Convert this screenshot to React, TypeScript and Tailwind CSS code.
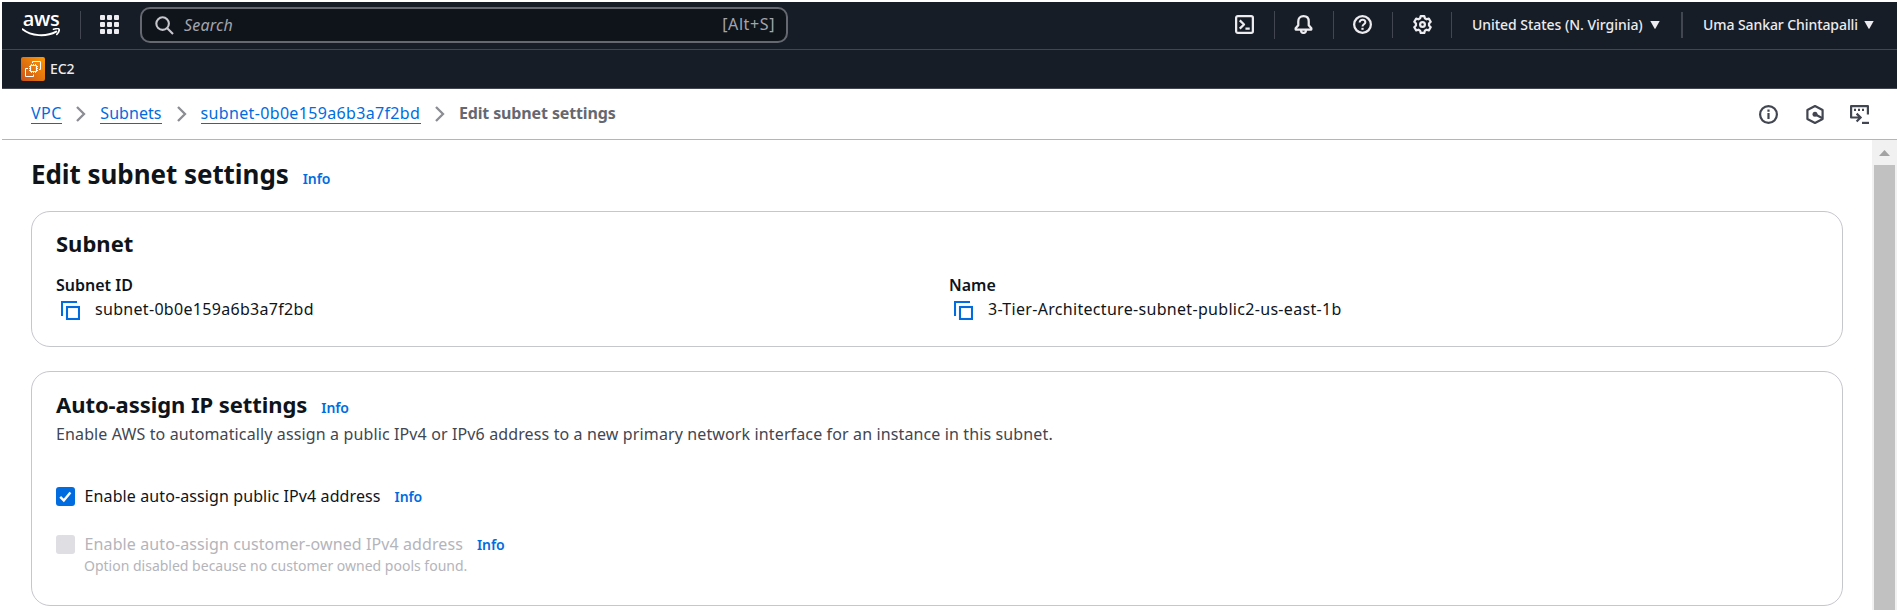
import type { ReactNode } from "react";

function AwsLogo() {
  return (
    <div className="flex w-[38px] flex-col items-center">
      <span className="h-[15px] font-['Open_Sans'] text-[20px] leading-[12px] font-semibold tracking-[-0.3px] text-white">aws</span>
      <svg width="38" height="9" viewBox="0 0 38 9" fill="none" stroke="#fff" className="block">
        <path d="M0.5 1.2C9 8.2 24 9.2 34.2 3.6" strokeWidth="2" strokeLinecap="round" />
        <path d="M31.5 1.2C34 0.6 36.6 0.5 37 1.2C37.4 2 36.6 4.6 34.8 6.4" strokeWidth="1.6" strokeLinecap="round" />
      </svg>
    </div>
  );
}

function Ec2Icon() {
  return (
    <svg width="24" height="24" viewBox="0 0 24 24" fill="none" className="block">
      <defs>
        <linearGradient id="ec2" x1="0" y1="1" x2="1" y2="0">
          <stop offset="0" stopColor="#c8511b" />
          <stop offset="1" stopColor="#ff9900" />
        </linearGradient>
      </defs>
      <rect width="24" height="24" rx="2" fill="url(#ec2)" />
      <g stroke="#fff" strokeWidth="1">
        <rect x="9.5" y="8.5" width="6" height="6" rx="0.5" strokeWidth="1.2" />
        <path d="M10.5 7v1.5M12.5 7v1.5M14.5 7v1.5M10.5 14.5V16M12.5 14.5V16M14.5 14.5V16M8 9.5h1.5M8 11.5h1.5M8 13.5h1.5M15.5 9.5H17M15.5 11.5H17M15.5 13.5H17" strokeWidth="0.9" />
        <path d="M11.5 6V4.5h8v8H18" />
        <path d="M7 11.5H4.5v8h8V17.5" />
      </g>
    </svg>
  );
}

function AppsIcon() {
  return (
    <svg width="19" height="19" viewBox="0 0 19 19" fill="#ebebf0" className="block">
      {[0, 7, 14].map((y) => [0, 7, 14].map((x) => <rect key={`${x}-${y}`} x={x} y={y} width="5" height="5" rx="1" />))}
    </svg>
  );
}

function HeaderIcon({ children }: { children: ReactNode }) {
  return (
    <svg width="19" height="19" viewBox="0 0 16 16" fill="none" stroke="#ebebf0" strokeWidth="1.9" strokeLinejoin="round" className="block">
      {children}
    </svg>
  );
}

function CopyIcon() {
  return (
    <svg width="19" height="19" viewBox="0 0 19 19" fill="none" stroke="#006ce0" strokeWidth="2.1" className="block">
      <path d="M1 15V1H16" />
      <rect x="6" y="6" width="12" height="12" />
    </svg>
  );
}

function Chevron() {
  return (
    <svg width="10" height="16" viewBox="0 0 10 16" fill="none" stroke="#8c8c94" strokeWidth="2.3" className="mt-[3px] block">
      <path d="M1 1L8 8L1 15" />
    </svg>
  );
}

function Caret() {
  return (
    <svg width="10" height="8" viewBox="0 0 10 8" fill="#ebebf0" className="block">
      <path d="M0.3 0H9.7L5.5 7.4Q5 8 4.5 7.4Z" />
    </svg>
  );
}

const Divider = () => <div className="h-[28px] w-px bg-[#424650]" />;

function Info({ className = "" }: { className?: string }) {
  return <a className={`text-[14px] leading-[20px] font-semibold tracking-[-0.1px] text-[#006ce0] ${className}`}>Info</a>;
}

function Field({ label, value }: { label: string; value: string }) {
  return (
    <div>
      <div className="text-[16px] leading-[20px] font-semibold tracking-[0px]">{label}</div>
      <div className="mt-1 flex h-5 items-center pl-[5px]">
        <div className="mt-[3px]">
          <CopyIcon />
        </div>
        <span className="ml-[15px] text-[16px] leading-[20px] tracking-[0.31px]">{value}</span>
      </div>
    </div>
  );
}

function TopBar() {
  return (
    <header className="bg-[#161d26] text-[#ebebf0]">
      <div className="flex h-[48px] items-center border-b border-[#424650] pb-[2px] pl-5">
        <AwsLogo />
        <div className="ml-5">
          <Divider />
        </div>
        <div className="ml-[19px]">
          <AppsIcon />
        </div>
        <div className="mt-px ml-[21px] flex h-[36px] w-[648px] items-center rounded-[10px] border-2 border-[#656871] bg-[#0f141a] pr-[11px] pl-[13px]">
          <svg width="19" height="19" viewBox="0 0 19 19" fill="none" stroke="#c6c6cd" strokeWidth="2.1" className="block">
            <circle cx="7.6" cy="7.6" r="6.3" />
            <path d="M12 12L18 18" />
          </svg>
          <span className="ml-[10px] text-[16px] leading-[20px] tracking-[0.2px] text-[#a4a4ad] italic">Search</span>
          <span className="mb-[3px] ml-auto text-[16px] leading-[20px] tracking-[0.6px] text-[#a4a4ad]">[Alt+S]</span>
        </div>
        <div className="ml-auto flex items-center">
          <HeaderIcon>
            <rect x="0.95" y="0.95" width="14.1" height="14.1" rx="1.4" />
            <path d="M4 4.5L7.6 8L4 11.5M8.8 11.4H12.4" />
          </HeaderIcon>
          <div className="mr-[19px] ml-[20px]">
            <Divider />
          </div>
          <HeaderIcon>
            <path d="M8 0.95C5 0.95 3.6 3 3.6 5.4V8.6L1.4 11.2V12.3H14.6V11.2L12.4 8.6V5.4C12.4 3 11 0.95 8 0.95Z" />
            <path d="M5.9 12.6C5.9 14 6.8 15.1 8 15.1C9.2 15.1 10.1 14 10.1 12.6" />
          </HeaderIcon>
          <div className="mr-[19px] ml-[20px]">
            <Divider />
          </div>
          <HeaderIcon>
            <circle cx="8" cy="8" r="7.05" />
            <path d="M5.6 6.3C5.6 4.9 6.7 4 8 4C9.4 4 10.4 4.9 10.4 6.1C10.4 7.8 8 7.8 8 9.7" strokeWidth="1.7" />
            <path d="M8 10.8V12.5" />
          </HeaderIcon>
          <div className="mr-[20px] ml-[20px]">
            <div className="h-[26px] w-px bg-[#424650]" />
          </div>
          <HeaderIcon>
            <path d="M6.5 0.95H9.5L10 2.8L11.4 3.6L13.3 3.1L14.9 5.7L13.5 7.1V8.9L14.9 10.3L13.3 12.9L11.4 12.4L10 13.2L9.5 15.05H6.5L6 13.2L4.6 12.4L2.7 12.9L1.1 10.3L2.5 8.9V7.1L1.1 5.7L2.7 3.1L4.6 3.6L6 2.8Z" />
            <circle cx="8" cy="8" r="2" />
          </HeaderIcon>
          <div className="ml-[19px] h-[26px] w-px bg-[#424650]" />
          <span className="ml-[20px] w-[172px] text-[14px] leading-[20px] font-medium tracking-[-0.04px] whitespace-nowrap">United States (N. Virginia)</span>
          <div className="mt-px ml-[6px]">
            <Caret />
          </div>
          <div className="ml-[21px] h-[26px] w-[2px] bg-[#424650]" />
          <span className="ml-[20px] w-[156px] text-[14px] leading-[20px] font-medium tracking-[-0.08px] whitespace-nowrap">Uma Sankar Chintapalli</span>
          <div className="mt-px mr-[23px] ml-[5px]">
            <Caret />
          </div>
        </div>
      </div>
      <div className="flex h-[39px] items-center border-b border-[#424650] pl-[19px]">
        <Ec2Icon />
        <span className="ml-[5px] text-[14px] leading-[20px] font-medium tracking-[-0.1px]">EC2</span>
      </div>
    </header>
  );
}

const crumbs = [
  { label: "VPC", box: "w-[31px] tracking-[0.5px]" },
  { label: "Subnets", box: "w-[62px] tracking-[0.05px]" },
  { label: "subnet-0b0e159a6b3a7f2bd", box: "w-[220px] tracking-[0.34px]" },
];

function Breadcrumbs() {
  return (
    <div className="flex h-[51px] items-start border-b border-[#b4b4bb] pt-[14px] pl-[29px]">
      <nav className="flex">
        {crumbs.map((c) => (
          <div key={c.label} className="flex">
            <a className={`block h-[21px] border-b border-[#006ce0] text-[16px] leading-[20px] whitespace-nowrap text-[#006ce0] ${c.box}`}>{c.label}</a>
            <div className="mr-[14px] ml-[14.3px] w-[10px]">
              <Chevron />
            </div>
          </div>
        ))}
        <span className="text-[16px] leading-[20px] font-bold tracking-[-0.13px] text-[#656871]">Edit subnet settings</span>
      </nav>
      <div className="mt-0.5 mr-[28px] ml-auto flex">
        <svg width="19" height="19" viewBox="0 0 19 19" fill="none" stroke="#424650" strokeWidth="2.2" className="block">
          <circle cx="9.5" cy="9.5" r="8.4" />
          <path d="M9.5 8V14M9.5 4.6V6.8" />
        </svg>
        <svg width="18" height="19" viewBox="0 0 18 19" fill="none" stroke="#424650" strokeWidth="2.2" strokeLinejoin="round" className="ml-7 block">
          <path d="M9 1.1L16.6 5V14L9 17.9L1.4 14V5Z" />
          <circle cx="9" cy="9.3" r="2.5" fill="#424650" stroke="none" />
          <path d="M9 9.3L16 13" />
        </svg>
        <svg width="19" height="19" viewBox="0 0 19 19" fill="none" stroke="#424650" strokeWidth="2.2" className="ml-[26px] block">
          <path d="M5 12.5H1.1V1.1H17.9V9.5" strokeLinejoin="round" />
          <path d="M4 4.8H6M8 4.8H10M12 4.8H14" />
          <path d="M5 12.5H10.5M6.6 8.6L10.6 12.5L6.6 16.6" />
          <path d="M12 17.9H19" />
        </svg>
      </div>
    </div>
  );
}

function Scrollbar() {
  return (
    <div className="flex w-[25px] flex-col items-center bg-[#f1f1f1]">
      <svg width="11" height="6" viewBox="0 0 11 6" className="mt-[10px] mb-[9px] block">
        <path d="M5.5 0L11 6H0Z" fill="#a3a3a3" />
      </svg>
      <div className="w-[21px] flex-1 bg-[#c1c1c1]" />
    </div>
  );
}

export default function App() {
  return (
    <div className="flex h-[610px] flex-col overflow-hidden bg-white px-0.5 pt-0.5 font-['Noto_Sans',sans-serif] text-[#0f141a]">
      <TopBar />
      <Breadcrumbs />
      <div className="flex min-h-0 flex-1">
        <main className="flex-1 pt-[18px] pr-[29px] pl-[29px]">
          <div className="flex items-baseline">
            <h1 className="text-[26px] leading-[32px] font-bold tracking-[-0.06px]">Edit subnet settings</h1>
            <Info className="ml-[14px]" />
          </div>
          <section className="mt-[21px] h-[136px] rounded-[19px] border border-[#c6c6cd] px-6 pt-[17px]">
            <h2 className="text-[22px] leading-[28px] font-bold">Subnet</h2>
            <div className="mt-[18px] grid grid-cols-2 gap-6">
              <Field label="Subnet ID" value="subnet-0b0e159a6b3a7f2bd" />
              <Field label="Name" value="3-Tier-Architecture-subnet-public2-us-east-1b" />
            </div>
          </section>
          <section className="mt-6 h-[235px] rounded-[19px] border border-[#c6c6cd] px-6 pt-[18px]">
            <div className="flex h-7 items-baseline">
              <h2 className="text-[22px] leading-[28px] font-bold tracking-[-0.06px]">Auto-assign IP settings</h2>
              <Info className="ml-[14px]" />
            </div>
            <p className="mt-[6px] text-[16px] leading-[20px] tracking-[0.126px] text-[#424650]">
              Enable AWS to automatically assign a public IPv4 or IPv6 address to a new primary network interface for an instance in this subnet.
            </p>
            <div className="mt-[42px] flex h-5 items-baseline">
              <span className="flex h-[19px] w-[19px] items-center justify-center self-center rounded-[3px] bg-[#006ce0]">
                <svg width="13" height="13" viewBox="0 0 13 13" fill="none" stroke="#fff" strokeWidth="2.4" className="block">
                  <path d="M1.2 6.8L4.8 10.4L11.4 2.4" />
                </svg>
              </span>
              <span className="ml-[9.6px] text-[16px] leading-[20px] tracking-[0.1px]">Enable auto-assign public IPv4 address</span>
              <Info className="ml-[14px]" />
            </div>
            <div className="mt-7 flex h-5 items-baseline">
              <span className="h-[19px] w-[19px] self-center rounded-[3px] bg-[#dedee3]" />
              <span className="ml-[9.6px] text-[16px] leading-[20px] tracking-[0.1px] text-[#b4b4bb]">Enable auto-assign customer-owned IPv4 address</span>
              <Info className="ml-[14px]" />
            </div>
            <p className="mt-0.5 ml-7 text-[14px] leading-[20px] text-[#b4b4bb]">Option disabled because no customer owned pools found.</p>
          </section>
        </main>
        <Scrollbar />
      </div>
    </div>
  );
}
